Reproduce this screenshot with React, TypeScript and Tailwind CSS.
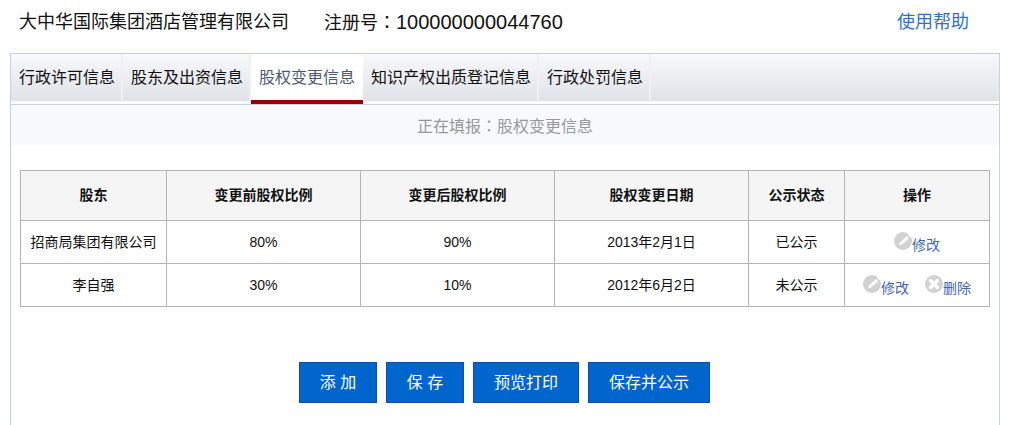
const tabs = ['行政许可信息', '股东及出资信息', '股权变更信息', '知识产权出质登记信息', '行政处罚信息'];
const activeTab = 2;

const rows = [
	{ name: '招商局集团有限公司', before: '80%', after: '90%', date: '2013年2月1日', status: '已公示', canDelete: false },
	{ name: '李自强', before: '30%', after: '10%', date: '2012年6月2日', status: '未公示', canDelete: true },
];

const buttons = [
	{ label: '添 加', width: 'w-[78px]' },
	{ label: '保 存', width: 'w-[78px]' },
	{ label: '预览打印', width: 'w-[106px]' },
	{ label: '保存并公示', width: 'w-[122px]' },
];

const EditIcon = () => (
	<svg className="size-[18px] shrink-0" viewBox="0 0 18 18">
		<circle cx="9" cy="9" r="9" fill="#d2d2d2" />
		<path d="M5 13.5 L6 10.5 L13 4 L15 6.5 L8 12.5 Z" fill="#fff" />
		<path d="M14 2.5 L18 0 L18 5 L16 5 Z" fill="#fff" />
	</svg>
);

const DeleteIcon = () => (
	<svg className="size-[18px] shrink-0" viewBox="0 0 18 18">
		<circle cx="9" cy="9" r="9" fill="#d2d2d2" />
		<path d="M5.5 5.5 L12.5 12.5 M12.5 5.5 L5.5 12.5" stroke="#fff" strokeWidth="3.4" strokeLinecap="round" />
	</svg>
);

const Action = ({ icon, label }: { icon: React.ReactNode; label: string }) => (
	<span className="inline-flex items-start">
		{icon}
		<a className="mt-[5px] text-[14px] leading-[16px] text-[#3f66b8]">{label}</a>
	</span>
);

// the centred full-width colon only comes from the TC cut of the font
const Colon = () => <span style={{ fontFamily: '"Noto Sans CJK TC", sans-serif' }}>：</span>;

export default function App() {
	return (
		<div
			className="h-screen overflow-hidden bg-white pl-[10px] pr-[19px] text-black"
			style={{ fontFamily: '"Liberation Sans", "Noto Sans CJK SC", sans-serif' }}
		>
			<div className="flex h-[53px] items-center justify-between pb-[9px] pl-[9px] pr-[31px]">
				<div className="flex items-center text-[18px] text-[#111]">
					<span>大中华国际集团酒店管理有限公司</span>
					<span className="ml-[35px]">
						注册号<Colon />
						<span className="text-[20px]">100000000044760</span>
					</span>
				</div>
				<a className="text-[18px] text-[#2f72c4]">使用帮助</a>
			</div>

			<div className="h-[372px] border border-b-0 border-[#c5d2e0]">
				<div className="flex h-[50px] border-b-[3px] border-white bg-gradient-to-b from-[#f8f9fb] to-[#dfe2e7]">
					{tabs.map((tab, index) => (
						<div
							key={tab}
							className={
								index === activeTab
									? 'flex h-[50px] items-center border-b-[4px] border-[#990000] bg-white px-2 pt-[1px] text-[16px] text-[#4d5a72]'
									: 'flex h-[47px] items-center border-r-2 border-[#eef0f3] pl-2 pr-[6px] text-[16px] text-[#111]'
							}
						>
							{tab}
						</div>
					))}
				</div>
				<div className="h-[41px] border-t border-[#c5d2e0] bg-[#f8f9fb] text-center text-[16px] leading-[40px] text-[#999]">
					正在填报<Colon />股权变更信息
				</div>

				<div className="px-[9px] pt-[25px]">
					<table className="w-[970px] table-fixed border-collapse text-center text-[14px] text-[#111]">
						<thead>
							<tr className="h-[50px] bg-[#f5f5f5] font-bold">
								<th className="w-[146px] border border-[#b5b5b5]">股东</th>
								<th className="w-[194px] border border-[#b5b5b5]">变更前股权比例</th>
								<th className="w-[194px] border border-[#b5b5b5]">变更后股权比例</th>
								<th className="w-[194px] border border-[#b5b5b5]">股权变更日期</th>
								<th className="w-[96px] border border-[#b5b5b5]">公示状态</th>
								<th className="border border-[#b5b5b5]">操作</th>
							</tr>
						</thead>
						<tbody>
							{rows.map((row) => (
								<tr key={row.name} className="h-[43px]">
									<td className="border border-[#b5b5b5]">{row.name}</td>
									<td className="border border-[#b5b5b5]">{row.before}</td>
									<td className="border border-[#b5b5b5]">{row.after}</td>
									<td className="border border-[#b5b5b5]">{row.date}</td>
									<td className="border border-[#b5b5b5]">{row.status}</td>
									<td className="border border-[#b5b5b5]">
										<div className="flex justify-center gap-[16px]">
											<Action icon={<EditIcon />} label="修改" />
											{row.canDelete && <Action icon={<DeleteIcon />} label="删除" />}
										</div>
									</td>
								</tr>
							))}
						</tbody>
					</table>

					<div className="mt-[55px] flex justify-center gap-[9px] pr-[1px]">
						{buttons.map((button) => (
							<button
								key={button.label}
								className={`${button.width} h-[41px] border border-[#0a4fa8] bg-[#0065cc] text-[16px] text-white`}
							>
								{button.label}
							</button>
						))}
					</div>
				</div>
			</div>
		</div>
	);
}
